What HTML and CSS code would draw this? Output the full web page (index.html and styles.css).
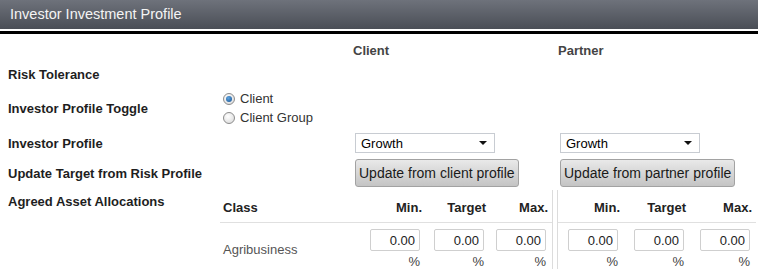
FILE: index.html
```html
<!DOCTYPE html>
<html lang="en">
<head>
  <meta charset="UTF-8">
  <meta name="viewport" content="width=device-width, initial-scale=1.0">
  <title>Investor Investment Profile</title>
  <link rel="stylesheet" href="styles.css">
</head>
<body>
  <div class="panel-title">Investor Investment Profile</div>
  <div class="panel-rule"></div>

  <div class="profile">
    <div></div>
    <div></div>
    <div class="col-head">Client</div>
    <div class="col-head">Partner</div>

    <div class="label">Risk Tolerance</div>
    <div class="wide"></div>

    <div class="label">Investor Profile Toggle</div>
    <div class="wide radios">
      <label class="radio"><input type="radio" name="toggle" checked> Client</label>
      <label class="radio"><input type="radio" name="toggle"> Client Group</label>
    </div>

    <div class="label">Investor Profile</div>
    <div></div>
    <div class="select-wrap">
      <select><option>Growth</option></select>
    </div>
    <div class="select-wrap">
      <select><option>Growth</option></select>
    </div>

    <div class="label">Update Target from Risk Profile</div>
    <div></div>
    <div><button class="btn">Update from client profile</button></div>
    <div><button class="btn">Update from partner profile</button></div>

    <div class="label label-top">Agreed Asset Allocations</div>
    <div class="wide alloc">
      <div class="alloc-client">
        <div class="th th-class">Class</div>
        <div class="th">Min.</div>
        <div class="th">Target</div>
        <div class="th">Max.</div>

        <div class="td td-class">Agribusiness</div>
        <div class="td"><input class="pct" value="0.00"><span>%</span></div>
        <div class="td"><input class="pct" value="0.00"><span>%</span></div>
        <div class="td"><input class="pct" value="0.00"><span>%</span></div>
      </div>
      <div class="alloc-partner">
        <div class="th">Min.</div>
        <div class="th">Target</div>
        <div class="th">Max.</div>

        <div class="td"><input class="pct" value="0.00"><span>%</span></div>
        <div class="td"><input class="pct" value="0.00"><span>%</span></div>
        <div class="td"><input class="pct" value="0.00"><span>%</span></div>
      </div>
    </div>
  </div>
</body>
</html>
```

FILE: styles.css
```css
body {
  margin: 0;
  font-family: "Liberation Sans", Arial, sans-serif;
  font-size: 13px;
  color: #222;
  background-color: #ffffff;
  overflow: hidden;
}

.panel-title {
  height: 29px;
  line-height: 29px;
  padding-left: 10px;
  font-size: 14.5px;
  color: #f4f4f4;
  background: linear-gradient(#6e727b, #4a4e56);
}

.panel-rule {
  height: 3px;
  margin-top: 2px;
  background-color: #000;
}

.profile {
  display: grid;
  grid-template-columns: 212px 135px 205px 1fr;
  grid-template-rows: 24px 24px 44px 26px 34px auto;
  align-items: center;
  padding-left: 8px;
  margin-top: 4px;
}

.wide {
  grid-column: 2 / 5;
}

.col-head {
  margin-left: -2px;
  font-weight: bold;
  color: #444;
}

.label {
  font-weight: bold;
  color: #1e1e1e;
}

.label-top {
  align-self: start;
  padding-top: 4px;
  line-height: 16px;
}

/* radios */
.radios {
  display: flex;
  flex-direction: column;
  padding-left: 3px;
}

.radio {
  display: flex;
  align-items: center;
  gap: 5px;
  height: 19px;
  color: #333;
}

.radio input {
  appearance: none;
  width: 12px;
  height: 12px;
  margin: 0;
  border: 1px solid #8c8c8c;
  border-radius: 50%;
  background: radial-gradient(circle at 40% 35%, #ffffff, #d6d6d6);
  display: grid;
  place-items: center;
}

.radio input:checked::after {
  content: "";
  width: 6px;
  height: 6px;
  border-radius: 50%;
  background: radial-gradient(circle at 40% 35%, #5fa4e0, #14508f);
}

/* selects */
.select-wrap {
  position: relative;
  width: 140px;
}

.select-wrap select {
  appearance: none;
  width: 140px;
  height: 20px;
  padding: 0 0 0 5px;
  border: 1px solid #c8ccd2;
  border-radius: 0;
  background-color: #fff;
  font-family: inherit;
  font-size: 13px;
  color: #000;
}

.select-wrap::after {
  content: "";
  position: absolute;
  right: 8px;
  top: 8px;
  border-left: 4px solid transparent;
  border-right: 4px solid transparent;
  border-top: 4px solid #111;
}

/* buttons */
.btn {
  height: 28px;
  padding: 0 3px;
  border: 1px solid #a2a2a2;
  border-radius: 3px;
  background: linear-gradient(#e9e9e9, #c4c4c4);
  font-family: inherit;
  font-size: 14px;
  color: #1a1a1a;
}

/* allocations */
.alloc {
  display: flex;
  align-self: start;
}

.alloc-client {
  display: grid;
  grid-template-columns: 146px 60px 64px 62px;
  border-right: 1px solid #dcdcdc;
}

.alloc-partner {
  display: grid;
  grid-template-columns: 66px 66px 66px;
  margin-left: 4px;
  border-left: 1px solid #dcdcdc;
}

.th {
  padding: 10px 4px 6px 0;
  line-height: 16px;
  font-weight: bold;
  text-align: right;
  border-bottom: 1px solid #e0e0e0;
}

.th-class {
  text-align: left;
  padding-left: 3px;
}

.td {
  display: flex;
  flex-direction: column;
  align-items: flex-end;
  padding: 6px 6px 0 0;
  color: #444;
}

.td span {
  margin-top: 3px;
  line-height: 15px;
}

.td-class {
  justify-content: center;
  align-items: flex-start;
  padding: 6px 0 0 3px;
  color: #555;
}

.pct {
  width: 50px;
  height: 22px;
  box-sizing: border-box;
  padding: 0 4px 0 0;
  border: 1px solid #cfcfcf;
  border-radius: 2px;
  text-align: right;
  font-family: inherit;
  font-size: 13px;
  color: #222;
}
```
